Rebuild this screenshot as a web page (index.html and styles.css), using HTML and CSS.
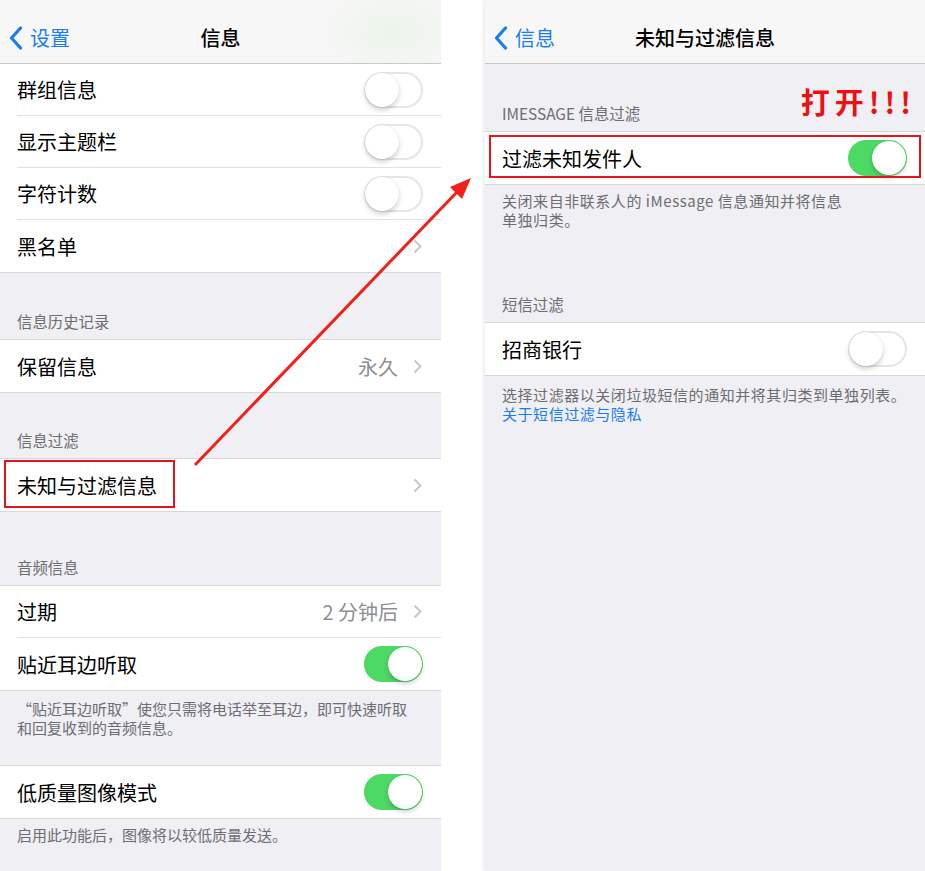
FILE: index.html
```html
<!DOCTYPE html>
<html lang="zh-CN">
<head>
    <meta charset="UTF-8">
    <meta name="viewport" content="width=device-width, initial-scale=1.0">
    <title>信息设置</title>
    <link rel="stylesheet" href="styles.css">
</head>
<body>
    <div class="page">
        <!-- Left screen: 信息 -->
        <div class="screen screen-left">
            <header class="navbar navbar-tint">
                <a class="back" href="#">
                    <svg width="14" height="24" viewBox="0 0 14 24"><path d="M11.5 2 L2.5 12 L11.5 22" fill="none" stroke="#1a7cf5" stroke-width="3.2" stroke-linecap="round" stroke-linejoin="round"/></svg>
                    设置
                </a>
                <h1 class="nav-title">信息</h1>
                <span></span>
            </header>

            <ul class="group group-first">
                <li class="row"><div class="row-body"><span class="label">群组信息</span><span class="switch"></span></div></li>
                <li class="row"><div class="row-body"><span class="label">显示主题栏</span><span class="switch"></span></div></li>
                <li class="row"><div class="row-body"><span class="label">字符计数</span><span class="switch"></span></div></li>
                <li class="row"><div class="row-body"><span class="label">黑名单</span><span class="chevron"></span></div></li>
            </ul>

            <div class="section-header h-66">信息历史记录</div>
            <ul class="group">
                <li class="row"><div class="row-body"><span class="label">保留信息</span><span class="detail">永久<span class="chevron"></span></span></div></li>
            </ul>

            <div class="section-header h-65">信息过滤</div>
            <ul class="group">
                <li class="row">
                    <div class="row-body"><span class="label">未知与过滤信息</span><span class="chevron"></span></div>
                    <span class="mark mark-left"></span>
                </li>
            </ul>

            <div class="section-header h-73">音频信息</div>
            <ul class="group">
                <li class="row"><div class="row-body"><span class="label">过期</span><span class="detail">2 分钟后<span class="chevron"></span></span></div></li>
                <li class="row"><div class="row-body"><span class="label">贴近耳边听取</span><span class="switch on"></span></div></li>
            </ul>
            <p class="section-footer f-gap">“贴近耳边听取”使您只需将电话举至耳边，即可快速听取<br>和回复收到的音频信息。</p>

            <ul class="group">
                <li class="row"><div class="row-body"><span class="label">低质量图像模式</span><span class="switch on"></span></div></li>
            </ul>
            <p class="section-footer">启用此功能后，图像将以较低质量发送。</p>
        </div>

        <div class="divider"></div>

        <!-- Right screen: 未知与过滤信息 -->
        <div class="screen screen-right">
            <header class="navbar">
                <a class="back" href="#">
                    <svg width="14" height="24" viewBox="0 0 14 24"><path d="M11.5 2 L2.5 12 L11.5 22" fill="none" stroke="#1a7cf5" stroke-width="3.2" stroke-linecap="round" stroke-linejoin="round"/></svg>
                    信息
                </a>
                <h1 class="nav-title">未知与过滤信息</h1>
                <span></span>
            </header>

            <div class="section-header h-67 with-note">
                <span>IMESSAGE 信息过滤</span>
                <span class="note">打开!!!</span>
            </div>
            <ul class="group">
                <li class="row">
                    <div class="row-body"><span class="label">过滤未知发件人</span><span class="switch on"></span></div>
                    <span class="mark mark-right"></span>
                </li>
            </ul>
            <p class="section-footer">关闭来自非联系人的 iMessage 信息通知并将信息<br>单独归类。</p>

            <div class="section-header h-93">短信过滤</div>
            <ul class="group">
                <li class="row"><div class="row-body"><span class="label">招商银行</span><span class="switch"></span></div></li>
            </ul>
            <p class="section-footer f-top">选择过滤器以关闭垃圾短信的通知并将其归类到单独列表。<br><a class="link" href="#">关于短信过滤与隐私</a></p>
        </div>

        <!-- Annotation arrow -->
        <svg class="arrow" width="925" height="871" viewBox="0 0 925 871">
            <line x1="195" y1="465" x2="457" y2="192" stroke="#f0201a" stroke-width="3"/>
            <polygon points="471,178 462,199 450,187" fill="#f0201a"/>
        </svg>
    </div>
</body>
</html>
```

FILE: styles.css
```css
/* Basic Reset */
* {
    margin: 0;
    padding: 0;
    box-sizing: border-box;
}

body {
    background-color: #fff;
    font-family: "Noto Sans CJK SC", "Noto Sans", sans-serif;
    color: #000;
}

/* Page with two phone screens */
.page {
    position: relative;
    display: flex;
    width: 925px;
    height: 871px;
    overflow: hidden;
}

.screen {
    background-color: #efeff4;
    height: 871px;
}

.screen-left {
    width: 441px;
    box-shadow: 2px 0 4px rgba(0, 0, 0, 0.06);
}

.screen-right {
    width: 440px;
    box-shadow: -2px 0 3px rgba(0, 0, 0, 0.07);
}

.divider {
    flex: 1;
    background-color: #fff;
}

/* Navigation bar */
.navbar {
    height: 64px;
    padding-top: 12px;
    display: grid;
    grid-template-columns: 1fr auto 1fr;
    align-items: center;
    background-color: #f7f7f7;
    border-bottom: 1px solid #c9c9cc;
}

.navbar-tint {
    background: radial-gradient(ellipse 80px 50px at 395px 32px, rgba(232, 244, 230, 0.8), rgba(247, 247, 247, 0) 100%), #f7f7f7;
}

.back {
    display: flex;
    align-items: center;
    gap: 7px;
    padding-left: 9px;
    font-size: 20px;
    color: #1a7cf5;
    text-decoration: none;
}

.nav-title {
    font-size: 20px;
    font-weight: 500;
}

/* Grouped table */
.group {
    list-style: none;
    background-color: #fff;
    border-top: 1px solid #d8d8dc;
    border-bottom: 1px solid #d8d8dc;
}

.group-first {
    border-top: none;
}

.row {
    position: relative;
    padding-left: 17px;
}

.row-body {
    height: 52px;
    display: flex;
    align-items: center;
    justify-content: space-between;
    padding-right: 18px;
    border-bottom: 1px solid #e0e0e4;
}

.row:last-child .row-body {
    border-bottom: none;
}

.label {
    font-size: 20px;
}

.detail {
    display: flex;
    align-items: center;
    gap: 15px;
    font-size: 20px;
    color: #8e8e93;
}

.chevron {
    width: 9px;
    height: 15px;
    margin-right: 1px;
    background: no-repeat center / 9px 15px url("data:image/svg+xml,%3Csvg xmlns='http://www.w3.org/2000/svg' width='9' height='15' viewBox='0 0 9 15'%3E%3Cpath d='M1.5 1.5 L7.5 7.5 L1.5 13.5' fill='none' stroke='%23c7c7cc' stroke-width='2'/%3E%3C/svg%3E");
}

/* Switch */
.switch {
    position: relative;
    width: 59px;
    height: 36px;
    border-radius: 18px;
    border: 2px solid #e6e6ea;
    background-color: #fff;
}

.switch::after {
    content: "";
    position: absolute;
    top: -1px;
    left: -1px;
    width: 34px;
    height: 34px;
    border-radius: 50%;
    background-color: #fff;
    box-shadow: 0 3px 5px rgba(0, 0, 0, 0.18), 0 0 1px rgba(0, 0, 0, 0.15);
}

.switch.on {
    background-color: #4cd964;
    border-color: #4cd964;
}

.switch.on::after {
    left: auto;
    right: -1px;
}

/* Section headers and footers */
.section-header {
    display: flex;
    align-items: flex-end;
    padding: 0 17px 8px;
    font-size: 15.4px;
    line-height: 20px;
    color: #6d6d72;
}

.h-65 { height: 65px; }
.h-66 { height: 66px; }
.h-67 { height: 67px; }
.h-73 { height: 73px; }
.h-93 { height: 93px; }

.with-note {
    justify-content: space-between;
}

.note {
    margin-right: -8px;
    margin-bottom: 5px;
    font-size: 29px;
    line-height: 34px;
    font-weight: 700;
    letter-spacing: 5px;
    color: #ee1010;
}

.section-footer {
    padding: 6px 17px 0;
    font-size: 15px;
    line-height: 19px;
    color: #6d6d72;
    white-space: nowrap;
}

.screen-right .section-footer {
    letter-spacing: 0.55px;
}

.f-gap {
    padding-top: 8px;
    padding-bottom: 28px;
}

.f-top {
    padding-top: 9px;
}

.link {
    color: #1a7cf5;
    text-decoration: none;
}

/* Red annotation boxes */
.mark {
    position: absolute;
    border: 2px solid #e8141c;
}

.mark-left {
    left: 4px;
    top: 1px;
    width: 171px;
    height: 48px;
}

.mark-right {
    left: 4px;
    right: 4px;
    top: 3px;
    bottom: 6px;
}

/* Arrow overlay */
.arrow {
    position: absolute;
    top: 0;
    left: 0;
    pointer-events: none;
}
```
